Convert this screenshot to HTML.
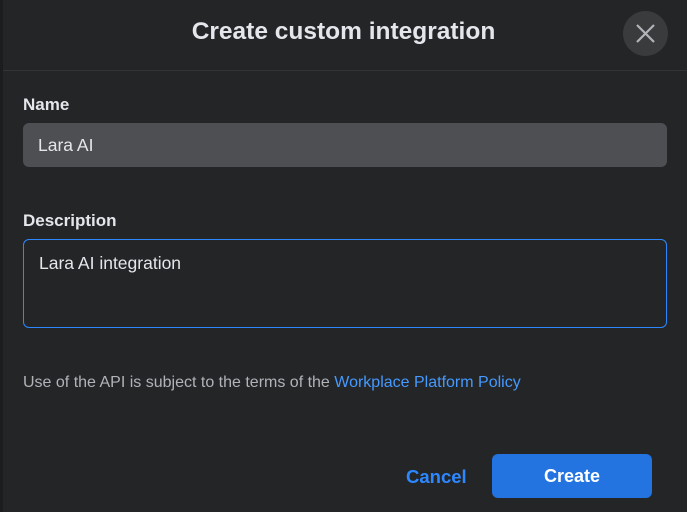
<!DOCTYPE html>
<html><head><style>
body{margin:0;width:687px;height:512px;background:#1c1d1f;font-family:"Liberation Sans",sans-serif;overflow:hidden;position:relative}
.d{position:absolute;left:3px;top:0;width:684px;height:512px;background:#242527}
.t{position:absolute;left:0;width:687px;top:18px;text-align:center;color:#e4e6eb;font-size:24.5px;font-weight:bold}
.hr{position:absolute;left:3px;right:0;top:70px;height:1px;background:#333437}
.x{position:absolute;left:623px;top:11px;width:45px;height:45px;border-radius:50%;background:#3a3b3d}
.l{position:absolute;left:23px;color:#e4e6eb;font-size:17px;font-weight:bold}
.in{position:absolute;left:23px;width:644px;box-sizing:border-box;border-radius:6px;color:#e4e6eb;font-size:17.5px;padding-left:15px}
a{color:#4599ff;text-decoration:none}
</style></head><body>
<div class="d"></div>
<div class="t">Create custom integration</div>
<div class="hr"></div>
<div class="x"><svg width="45" height="45"><path d="M14 14L31 31M31 14L14 31" stroke="#b0b3b8" stroke-width="2.2"/></svg></div>
<div class="l" style="top:95px">Name</div>
<div class="in" style="top:123px;height:44px;background:#4e4f52;line-height:44px">Lara AI</div>
<div class="l" style="top:211px">Description</div>
<div class="in" style="top:239px;height:89px;border:1.5px solid #2d88ff;padding-top:13px">Lara AI integration</div>
<div style="position:absolute;left:23px;top:374px;font-size:16px;color:#b0b3b8">Use of the API is subject to the terms of the <a>Workplace Platform Policy</a></div>
<div style="position:absolute;left:406px;top:466px;font-size:18.5px;font-weight:bold;color:#2d88ff">Cancel</div>
<div style="position:absolute;left:492px;top:454px;width:160px;height:44px;border-radius:6px;background:#2374e1;color:#fff;font-size:18px;font-weight:bold;text-align:center;line-height:44px">Create</div>
</body></html>
